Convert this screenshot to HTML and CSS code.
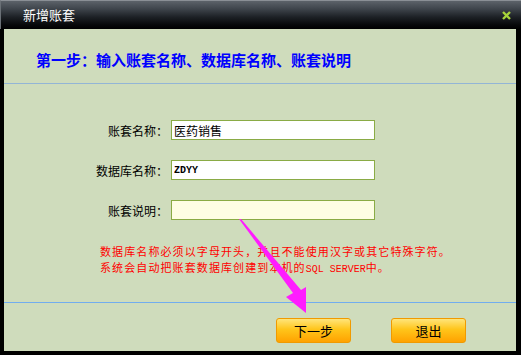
FILE: index.html
```html
<!DOCTYPE html>
<html lang="zh-CN">
<head>
    <meta charset="UTF-8">
    <title>新增账套</title>
    <link rel="stylesheet" href="styles.css">
</head>
<body>
    <div class="window">
        <div class="titlebar">
            <span class="title">新增账套</span>
            <svg class="close" width="9" height="9" viewBox="0 0 9 9">
                <path d="M1 1 L8 8 M8 1 L1 8" stroke="#a6d43a" stroke-width="2.4"/>
            </svg>
        </div>
        <div class="content">
            <div class="heading">第一步：输入账套名称、数据库名称、账套说明</div>
            <div class="main">
                <div class="row">
                    <label class="label">账套名称：</label>
                    <input class="field" type="text" value="医药销售">
                </div>
                <div class="row">
                    <label class="label">数据库名称：</label>
                    <input class="field mono" type="text" value="ZDYY">
                </div>
                <div class="row">
                    <label class="label">账套说明：</label>
                    <input class="field note" type="text" value="">
                </div>
                <div class="hint">
                    <div>数据库名称必须以字母开头，并且不能使用汉字或其它特殊字符。</div>
                    <div>系统会自动把账套数据库创建到本机的<span class="ascii">SQL SERVER</span>中。</div>
                </div>
            </div>
            <div class="footer">
                <button class="btn">下一步</button>
                <button class="btn">退出</button>
            </div>
        </div>
        <!-- 指示箭头 -->
        <svg class="arrow" width="521" height="355" viewBox="0 0 521 355">
            <polygon points="239,219 241,219 301,290 306,287 306,313 286,297 293,293" fill="#ff1cff"/>
        </svg>
    </div>
</body>
</html>
```

FILE: styles.css
```css
body {
    margin: 0;
    background: #000;
    font-family: "Noto Sans CJK SC", "Liberation Sans", sans-serif;
}
.window {
    position: relative;
    width: 521px;
    height: 355px;
    display: flex;
    flex-direction: column;
    background: #000;
}
.titlebar {
    height: 29px;
    box-sizing: border-box;
    display: flex;
    align-items: center;
    justify-content: space-between;
    padding: 0 10px 0 22px;
    border-top: 1px solid #8a8f95;
    border-left: 1px solid #6a7076;
    background: linear-gradient(#5c6269 0, #3e444b 8px, #1d2126 16px, #07080a 24px, #000 28px);
}
.title {
    color: #fff;
    font-size: 13px;
    line-height: 16px;
}
.close {
    display: block;
}
.content {
    flex: 1;
    margin: 0 5px 4px 4px;
    background: #cfdcbc;
    display: flex;
    flex-direction: column;
}
.heading {
    padding: 22px 0 14px 32px;
    font-size: 15px;
    line-height: 18px;
    font-weight: bold;
    color: #0000ff;
    border-bottom: 1px solid #93b5d6;
}
.main {
    flex: 1;
    padding-top: 36px;
    display: flex;
    flex-direction: column;
    gap: 20px;
    border-bottom: 1px solid #72adee;
}
.row {
    display: flex;
    align-items: center;
}
.label {
    width: 164px;
    margin-right: 3px;
    text-align: right;
    font-size: 12px;
    color: #000;
}
.field {
    width: 204px;
    height: 20px;
    box-sizing: border-box;
    margin: 0;
    padding: 0 2px;
    border: 1px solid #8aab45;
    background: #fff;
    font-family: "Noto Sans CJK SC", sans-serif;
    font-size: 12px;
    color: #000;
    outline: none;
}
.mono {
    font-family: "Liberation Mono", monospace;
    font-size: 10px;
    font-weight: bold;
}
.note {
    background: #fefee4;
}
.hint {
    margin-top: 3px;
    padding-left: 96px;
    font-size: 11px;
    letter-spacing: 1.1px;
    line-height: 16px;
    color: #ff0000;
}
.ascii {
    font-family: "Liberation Mono", monospace;
    font-size: 10px;
    letter-spacing: 0;
}
.footer {
    height: 48px;
    box-sizing: border-box;
    padding: 15px 50px 0 0;
    display: flex;
    justify-content: flex-end;
    align-items: flex-start;
    gap: 40px;
}
.btn {
    width: 75px;
    height: 25px;
    padding: 0;
    border: 1px solid #f09a00;
    border-radius: 3px;
    background: linear-gradient(#ffe57a 0, #ffc51a 45%, #ffa200 100%);
    font-family: "Noto Sans CJK SC", sans-serif;
    font-size: 13px;
    color: #000;
    cursor: pointer;
}
.arrow {
    position: absolute;
    left: 0;
    top: 0;
    pointer-events: none;
}
```
